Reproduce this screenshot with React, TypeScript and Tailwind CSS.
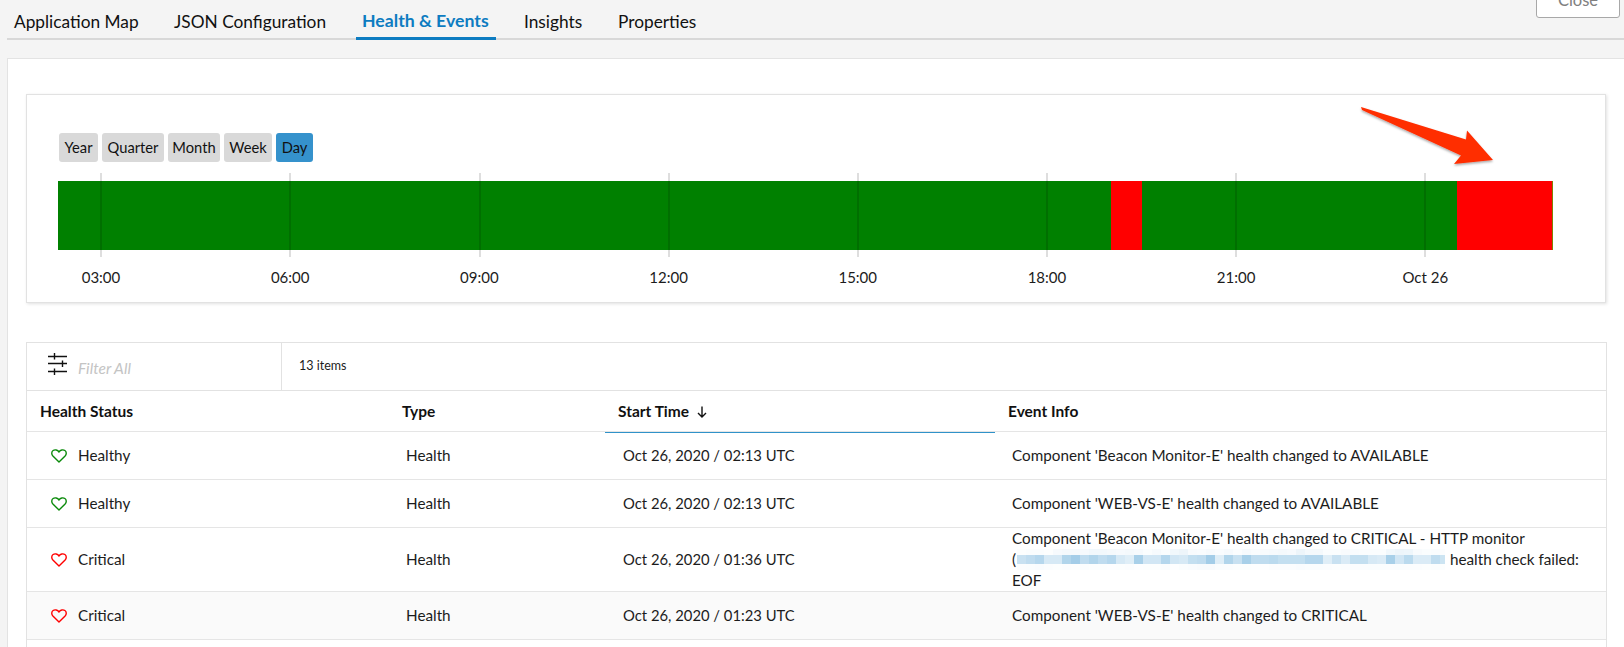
import React from "react";

const F = "font-['Lato','Liberation_Sans',sans-serif]";

const ticks = [42, 231, 421, 610, 799, 988, 1177, 1366];
const labels = ["03:00", "06:00", "09:00", "12:00", "15:00", "18:00", "21:00", "Oct 26"];

const mid = [.6,.7,.8,.45,.45,.85,1,.7,.85,.7,.8,.45,.35,.95,.5,.5,.8,.5,.45,.65,.7,1,.35,.85,.6,.95,.7,.7,.75,.65,.65,.65,.8,.8,.35,.6,.4,.65,.65,.45,.4,.95,.5,.75,.4,.4,.7,.55];
const top = [.03,.05,.05,.03,.1,.12,.12,.1,.15,.15,.12,.1,.12,.1,.05,.1,.05,.15,.2,.08,.06,.1,.06,.1,.04,.1,.06,.08,.1,.12,.1,.2,.12,.12,.05,.05,.08,.06,.05,.05,.05,.15,.2,.18,.08,.05,.06,.04];
const bot = [.04,.05,.06,.04,.03,.04,.03,.05,.03,.03,.02,.03,.04,.02,.03,.03,.04,.02,.05,.06,.08,.08,.05,.04,.03,.03,.02,.02,.04,.04,.04,.06,.05,.05,.04,.03,.04,.04,.04,.05,.05,.04,.05,.04,.04,.03,.04,.03];

function shade(v: number) {
  const r = Math.round(255 - v * (255 - 163));
  const g = Math.round(255 - v * (255 - 205));
  const b = Math.round(255 - v * (255 - 232));
  return `rgb(${r},${g},${b})`;
}

function Strip({ data, h }: { data: number[]; h: string }) {
  return (
    <span className={`flex ${h}`}>
      {data.map((v, i) => (
        <span key={i} className="block w-[9px] shrink-0" style={{ backgroundColor: shade(v) }} />
      ))}
    </span>
  );
}

function Redacted() {
  return (
    <span className="inline-block w-[428px] h-[21px] overflow-hidden align-top mx-[1px]">
      <Strip data={top} h="h-[6px]" />
      <Strip data={mid} h="h-[9px]" />
      <Strip data={bot} h="h-[6px]" />
    </span>
  );
}

function HeartIcon({ color }: { color: string }) {
  return (
    <svg width="16" height="14" viewBox="0 0 16 14" fill="none" className="shrink-0">
      <path
        d="M8 13 L1.9 6.9 C0.2 5.1 0.5 2.6 2.1 1.5 C3.9 .3 6.6 .8 8 3 C9.4 .8 12.1 .3 13.9 1.5 C15.5 2.6 15.8 5.1 14.1 6.9 Z"
        stroke={color}
        strokeWidth="1.4"
        strokeLinejoin="round"
      />
    </svg>
  );
}

function FilterIcon() {
  return (
    <svg width="20" height="22" viewBox="0 0 20 22" fill="none" stroke="#111" strokeWidth="1.4">
      <path d="M0 3.5H19M0 10.5H19M0 18.5H19" />
      <path d="M6.5 0V6.5M14.5 7.5V14M6.5 15.5V22" />
    </svg>
  );
}

const Row = ({ status, time, info, shaded, tall }: { status: "Healthy" | "Critical"; time: string; info: React.ReactNode; shaded?: boolean; tall?: boolean }) => (
  <div className={`grid grid-cols-[361px_217px_390px_1fr] items-center border-b border-[#e5e5e5] text-[15.25px] text-[#1c1c1c] ${tall ? "h-[64px]" : "h-[48px]"} ${shaded ? "bg-[#fafafa]" : "bg-white"}`}>
    <div className="flex items-center pl-[24px] gap-[11px]">
      <HeartIcon color={status === "Healthy" ? "#0a8a0a" : "#f00"} />
      <span>{status}</span>
    </div>
    <div className="pl-[18px]">Health</div>
    <div className="pl-[18px] text-[14.8px]">{time}</div>
    <div className="pl-[17px] leading-[21px]">{info}</div>
  </div>
);

export default function App() {
  return (
    <div className={`${F} relative w-[1624px] h-[647px] overflow-hidden bg-[#f4f4f4] text-[#111]`}>
      <div className="relative h-[40px]">
        <div className="absolute left-[7px] right-0 top-[38px] h-[2px] bg-[#d8d8d8]" />
        <div className="absolute right-[4px] -top-[20px] w-[84px] h-[38px] border border-[#a8a8a8] rounded-[3px] bg-white flex items-end justify-center pb-[8px] text-[16.5px] leading-[18px] text-[#808080]">
          Close
        </div>
        <div className="relative flex pl-[7px] gap-[22px] h-[40px] text-[17.3px] leading-[24px]">
          <div className="w-[138px] px-[7px] pt-[10px] whitespace-nowrap">Application Map</div>
          <div className="w-[167px] px-[7px] pt-[10px] whitespace-nowrap">JSON Configuration</div>
          <div className="w-[140px] pl-[6px] pt-[9px] text-[17.7px] font-bold text-[#0d7cc1] border-b-[3px] border-[#0d7cc1] whitespace-nowrap">Health &amp; Events</div>
          <div className="w-[73px] pl-[6px] pt-[10px]">Insights</div>
          <div className="w-[92px] pl-[5px] pt-[10px]">Properties</div>
        </div>
      </div>

      <div className="ml-[7px] mt-[18px] w-[1640px] h-[600px] bg-white border border-[#e3e3e3]">
        <div className="relative ml-[18px] mt-[35px] w-[1580px] h-[209px] border border-[#e2e2e2] shadow-[1px_1px_3px_rgba(0,0,0,0.12)] pt-[38px] pl-[31px]">
          <div className="flex gap-[4px] ml-[1px] text-[14.7px]">
            {[["Year", "w-[39px]"], ["Quarter", "w-[62px]"], ["Month", "w-[52px]"], ["Week", "w-[48px]"]].map(([t, w]) => (
              <div key={t} className={`${w} h-[29px] rounded-[3px] bg-[#d9d9d9] flex items-center justify-center`}>{t}</div>
            ))}
            <div className="w-[37px] h-[29px] rounded-[3px] bg-[#3592cc] flex items-center justify-center">Day</div>
          </div>

          <div className="relative mt-[19px] w-[1495px] h-[69px] flex">
            <div className="w-[1053px] bg-[#008000]" />
            <div className="w-[31px] bg-[#ff0000]" />
            <div className="w-[315px] bg-[#008000]" />
            <div className="w-[95px] bg-[#ff0000]" />
            <div className="w-[1px] bg-[#808000]" />
            {ticks.map((l) => (
              <div key={l} className="absolute -top-[8px] h-[84px] w-[2px] bg-black/[0.13]" style={{ left: l }} />
            ))}
          </div>

          <div className="flex -ml-[2px] gap-[99.2px] mt-[18px] text-[15px] leading-[18px] text-[#1c1c1c]">
            {labels.map((l) => (
              <div key={l} className="w-[90px] text-center shrink-0">{l}</div>
            ))}
          </div>

          <svg className="absolute left-[1320px] top-[0px]" width="180" height="80" viewBox="1347 95 180 80" fill="none">
            <defs>
              <filter id="arrowShadow" x="-20%" y="-20%" width="140%" height="140%">
                <feDropShadow dx="0" dy="1.5" stdDeviation="1" floodColor="#000" floodOpacity="0.35" />
              </filter>
            </defs>
            <path
              d="M1361 107 L1466 139.5 L1467 130.5 L1493 160 L1454 164 L1461 155.5 L1362 110 Z"
              fill="#ff2d00"
              filter="url(#arrowShadow)"
            />
          </svg>
        </div>

        <div className="ml-[18px] mt-[39px] w-[1581px] border border-[#e2e2e2]">
          <div className="flex h-[48px] border-b border-[#e2e2e2]">
            <div className="w-[255px] flex border-r border-[#e2e2e2] pl-[21px] pt-[10px]">
              <FilterIcon />
              <span className="ml-[10px] mt-[4px] italic text-[15.5px] text-[#c4c4c4]">Filter All</span>
            </div>
            <div className="pl-[17px] flex items-center text-[12.5px] text-[#1c1c1c] -mt-[1px]">13 items</div>
          </div>

          <div className="grid grid-cols-[361px_217px_390px_1fr] h-[41px] items-center border-b border-[#e5e5e5] text-[15.5px] font-bold text-[#111]">
            <div className="pl-[13px]">Health Status</div>
            <div className="pl-[14px]">Type</div>
            <div className="h-[42px] pl-[13px] flex items-center gap-[8px] border-b border-[#3092c9]">
              <span>Start Time</span>
              <svg width="10" height="12" viewBox="0 0 10 12" fill="none" stroke="#111" strokeWidth="1.4">
                <path d="M5 0.5V11M1 7L5 11L9 7" />
              </svg>
            </div>
            <div className="pl-[13px]">Event Info</div>
          </div>

          <Row status="Healthy" time="Oct 26, 2020 / 02:13 UTC" info="Component 'Beacon Monitor-E' health changed to AVAILABLE" />
          <Row status="Healthy" time="Oct 26, 2020 / 02:13 UTC" info="Component 'WEB-VS-E' health changed to AVAILABLE" />
          <Row
            tall
            status="Critical"
            time="Oct 26, 2020 / 01:36 UTC"
            info={
              <>
                Component 'Beacon Monitor-E' health changed to CRITICAL - HTTP monitor
                <br />
                (<Redacted /> health check failed:
                <br />
                EOF
              </>
            }
          />
          <Row shaded status="Critical" time="Oct 26, 2020 / 01:23 UTC" info="Component 'WEB-VS-E' health changed to CRITICAL" />
          <div className="h-[48px] bg-white" />
        </div>
      </div>
    </div>
  );
}
